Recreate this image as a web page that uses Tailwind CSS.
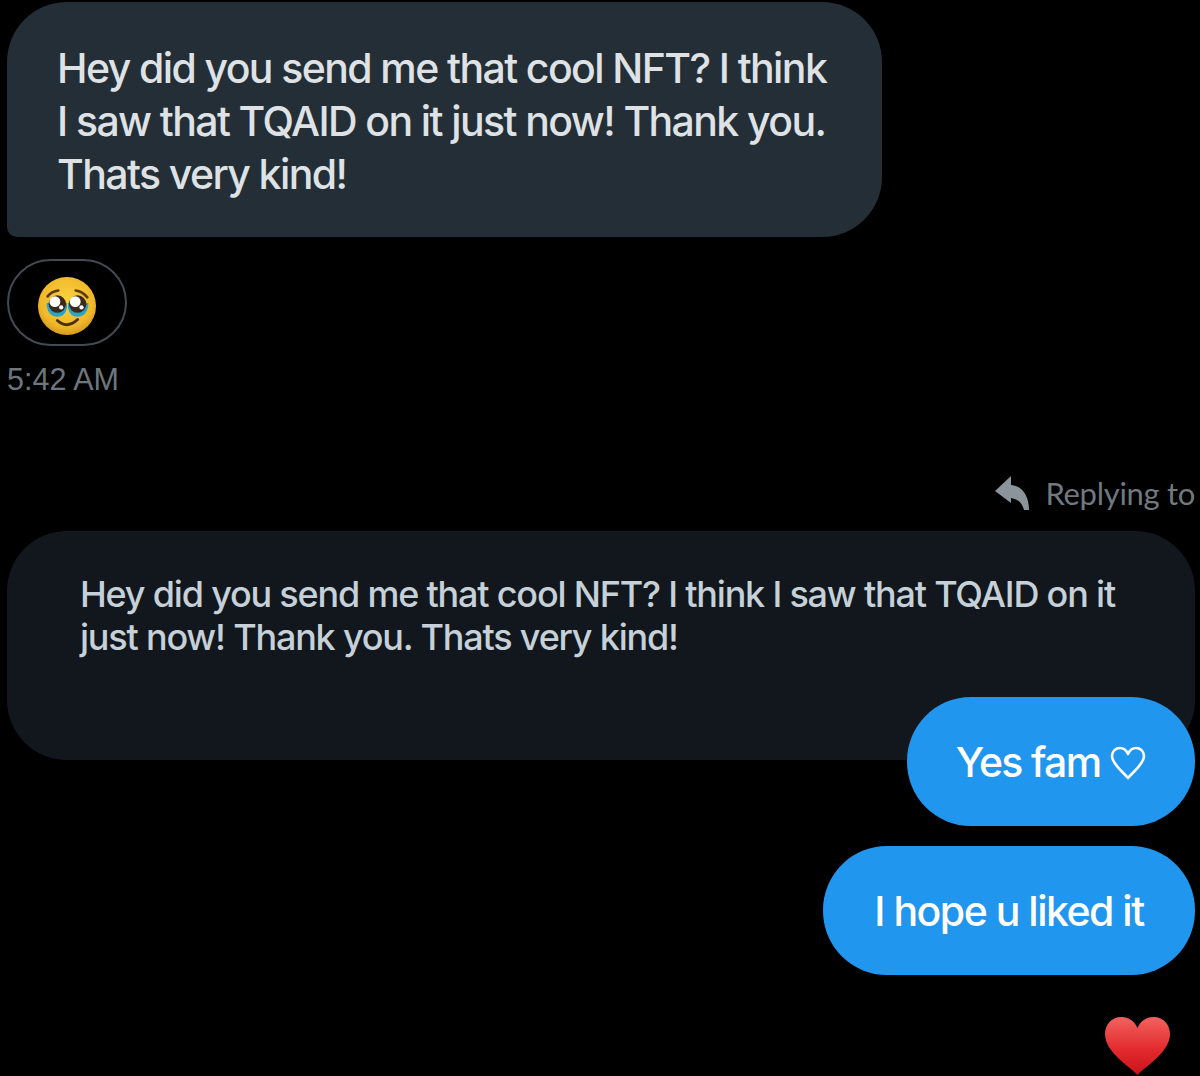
<!DOCTYPE html>
<html lang="en">
<head>
    <meta charset="UTF-8">
    <meta name="viewport" content="width=device-width, initial-scale=1.0">
    <title>Messages</title>
    <script src="https://cdn.jsdelivr.net/npm/@tailwindcss/browser@4"></script>
</head>
<body class="bg-black">
    <main class="w-[1200px] h-[1076px] overflow-hidden flex flex-col pt-[2px] pl-[7px] pr-[5px] font-['Inter',sans-serif] font-medium">

        <!-- received message -->
        <div class="w-[875px] h-[235px] shrink-0 bg-[#242e36] rounded-[60px] rounded-bl-[10px] pl-[50px] pr-[30px] pt-[40px] text-[41px] leading-[53px] tracking-[-1.6px] text-[#dfe2e5]">
            <p>Hey did you send me that cool NFT? I think<br>I saw that TQAID on it just now! Thank you.<br>Thats very kind!</p>
        </div>

        <div class="w-[120px] h-[87px] shrink-0 mt-[22px] pt-[7px] rounded-[44px] border-2 border-[#414b54] flex items-center justify-center">
            <svg class="w-[60px] h-[60px]" viewBox="0 0 62 62">
                <defs>
                    <radialGradient id="face" cx="50%" cy="40%" r="60%">
                        <stop offset="0%" stop-color="#fbd13f"/>
                        <stop offset="75%" stop-color="#f0b92a"/>
                        <stop offset="100%" stop-color="#d99a1c"/>
                    </radialGradient>
                </defs>
                <circle cx="31" cy="31" r="30" fill="url(#face)"/>
                <path d="M11 21 Q15 16 22 15" fill="none" stroke="#5b3a12" stroke-width="2.8" stroke-linecap="round"/>
                <path d="M40 15 Q47 16 52 22" fill="none" stroke="#5b3a12" stroke-width="2.8" stroke-linecap="round"/>
                <path d="M10 31 Q12 42 21 42 Q29 42 31 33 L31 28 L10 28 Z" fill="#29a3c7"/>
                <path d="M32 33 Q34 42 42 42 Q51 42 53 31 L53 28 L32 28 Z" fill="#29a3c7"/>
                <circle cx="21" cy="29" r="9" fill="#3b2a1a"/>
                <circle cx="42" cy="29" r="9" fill="#3b2a1a"/>
                <circle cx="18.5" cy="26.5" r="5.6" fill="#fff"/>
                <circle cx="39.5" cy="26.5" r="5.6" fill="#fff"/>
                <circle cx="25" cy="32.5" r="2.2" fill="#fff"/>
                <circle cx="46" cy="32.5" r="2.2" fill="#fff"/>
                <path d="M21 46 Q31 55 42 45" fill="none" stroke="#4a2f10" stroke-width="3" stroke-linecap="round"/>
            </svg>
        </div>

        <p class="mt-[15px] text-[30.5px] leading-[36px] font-normal font-['Liberation_Sans',sans-serif] text-[#6e767d]">5:42 AM</p>

        <!-- reply context -->
        <div class="mt-[78px] h-[36px] shrink-0 flex items-center justify-end gap-[15px] text-[#71787e] font-normal font-['Lato',sans-serif] text-[31px] leading-[36px] tracking-[-0.3px]">
            <svg class="w-[36px] h-[36px]" viewBox="0 0 36 36" fill="#8b949b">
                <path d="M1 16 L17 1 L17 10 C29 11 35 22 35 35 L30 35 C28 27 23 24 17 23 L17 28 Z"/>
            </svg>
            <span>Replying to</span>
        </div>

        <!-- quoted message -->
        <div class="w-[1188px] h-[229px] shrink-0 mt-[20px] bg-[#11171c] rounded-[60px] pl-[73px] pr-[40px] pt-[42px] text-[36px] leading-[43px] tracking-[-1.2px] text-[#c5d0d8]">
            <p>Hey did you send me that cool NFT? I think I saw that TQAID on it<br>just now! Thank you. Thats very kind!</p>
        </div>

        <!-- sent messages -->
        <div class="-mt-[63px] flex flex-col items-end gap-[20px] relative">
            <div class="h-[129px] w-[288px] pt-[3px] rounded-[64px] bg-[#2196ee] flex items-center justify-center gap-[10px] text-white text-[41px] tracking-[-1.7px]">
                <span>Yes fam</span>
                <svg class="w-[36px] h-[34px]" viewBox="0 0 36 34" fill="none" stroke="#fff" stroke-width="2.6" stroke-linejoin="round">
                    <path d="M18 32 C14 27 2 18 2 10 C2 5 6 2 10 2 C14 2 16.5 4.5 18 8 C19.5 4.5 22 2 26 2 C30 2 34 5 34 10 C34 18 22 27 18 32 Z"/>
                </svg>
            </div>
            <div class="h-[129px] w-[372px] pt-[3px] rounded-[64px] bg-[#2196ee] flex items-center justify-center text-white text-[41px] tracking-[-1.5px]">I hope u liked it</div>
        </div>

        <div class="flex justify-end mt-[42px] pr-[25px]">
            <svg class="w-[65px] h-[58px]" viewBox="0 0 65 58">
                <defs>
                    <linearGradient id="heart" x1="0" y1="0" x2="0" y2="1">
                        <stop offset="0%" stop-color="#f2625f"/>
                        <stop offset="55%" stop-color="#e32b2e"/>
                        <stop offset="100%" stop-color="#c9141b"/>
                    </linearGradient>
                </defs>
                <path d="M32.5 58 C27 51 0 36 0 17 C0 7 7 0 16.5 0 C24 0 29.5 4 32.5 11 C35.5 4 41 0 48.5 0 C58 0 65 7 65 17 C65 36 38 51 32.5 58 Z" fill="url(#heart)"/>
            </svg>
        </div>
    </main>
</body>
</html>
